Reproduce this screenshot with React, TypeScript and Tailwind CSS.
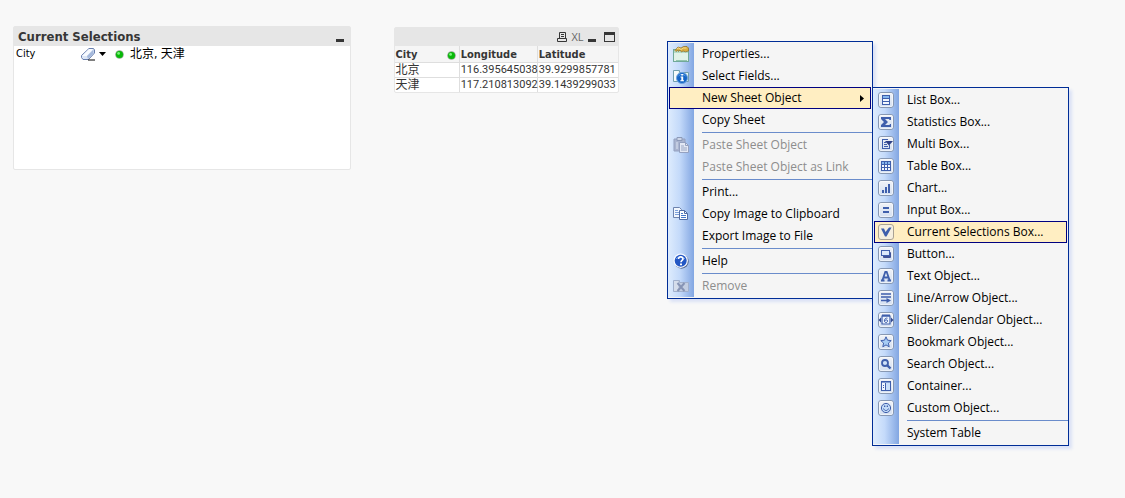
import React from "react";

type Entry = { label: string; icon?: React.ReactNode; disabled?: boolean; active?: boolean; submenu?: Entry[] } | "separator";

const BLUE = "#3f5fac";

function Svg({ children, size = 16 }: { children: React.ReactNode; size?: number }) {
  return (
    <svg width={size} height={size} viewBox={`0 0 ${size} ${size}`} className="shrink-0" aria-hidden="true">
      {children}
    </svg>
  );
}

function Tile({ children }: { children: React.ReactNode }) {
  return (
    <Svg>
      <defs>
        <linearGradient id="tile" x1="0" y1="0" x2="0" y2="1">
          <stop offset="0" stopColor="#f1f3f7" />
          <stop offset="1" stopColor="#d3dff1" />
        </linearGradient>
      </defs>
      <rect x="0.5" y="0.5" width="15" height="15" rx="2.5" fill="url(#tile)" stroke="#8798b3" />
      <rect x="1.5" y="1.5" width="13" height="13" rx="1.5" fill="none" stroke="#fff" strokeOpacity="0.55" />
      {children}
    </Svg>
  );
}

const tiles = {
  list: (
    <Tile>
      <rect x="4.5" y="3.5" width="7" height="9" fill="#f1f6fd" stroke={BLUE} />
      <path d="M5 4h6v2H5z" fill="#84b6ee" />
      <path d="M4 6.5h8M4 9.5h8" stroke={BLUE} />
    </Tile>
  ),
  sigma: (
    <Tile>
      <path d="M3 3h10v3h-1.5l-.5-1H7l3 3-3 3h4.500l.5-1H13v3H3v-2l3-3-3-3z" fill={BLUE} />
    </Tile>
  ),
  multi: (
    <Tile>
      <path d="M4.500 3v10M4 3.500h6M4 12.500h7.500M11.500 9v4M6 6.500h2M6 8.500h3M6 10.500h4" stroke={BLUE} fill="none" />
      <path d="M7 5h8l-4 4.500z" fill="#2c3f86" />
    </Tile>
  ),
  table: (
    <Tile>
      <rect x="3.500" y="3.500" width="9" height="9" fill="#f4f8fe" stroke={BLUE} />
      <path d="M4 4h8v2H4z" fill="#84b6ee" />
      <path d="M6.500 3v10M9.500 3v10M3 6.500h10M3 9.500h10" stroke={BLUE} />
    </Tile>
  ),
  chart: (
    <Tile>
      <path d="M4 10h2v3H4zM7 7h2v6H7zM10 4h2v9h-2z" fill={BLUE} />
    </Tile>
  ),
  input: (
    <Tile>
      <path d="M5 5h6v2H5zM5 9h6v2H5z" fill={BLUE} />
    </Tile>
  ),
  check: (
    <Svg>
      <rect x="0.500" y="0.500" width="15" height="15" rx="2.500" fill="#f6efdf" stroke="#aaa294" />
      <path d="M3 4.500h3L7.500 8 11 3.500h2.500L8.500 12.500h-1.500z" fill={BLUE} />
    </Svg>
  ),
  button: (
    <Tile>
      <rect x="5" y="6" width="8" height="6" rx="1" fill="#3f5298" />
      <rect x="3.500" y="4.500" width="8" height="5" fill="#dce9fb" stroke={BLUE} />
    </Tile>
  ),
  text: (
    <Tile>
      <path d="M4.500 12 7.300 4h1.400l2.800 8M5.500 9.500h5M3 12.500h3.500M9.500 12.500H13" stroke={BLUE} strokeWidth="1.800" fill="none" />
    </Tile>
  ),
  line: (
    <Tile>
      <path d="M3 4h10M3 7h10" stroke={BLUE} strokeWidth="1.600" />
      <path d="M3 10.500h6" stroke={BLUE} strokeWidth="1.500" />
      <path d="M8.500 8 13 10.500 8.500 13z" fill={BLUE} />
    </Tile>
  ),
  slider: (
    <Tile>
      <path d="M0.500 8l2.500-2.500v5zM15.500 8l-2.500-2.500v5z" fill="#33498f" />
      <path d="M4 4h8v8H4z" fill="#edf4fd" stroke={BLUE} strokeWidth="1.200" />
      <path d="M4 3.500h8" stroke={BLUE} strokeWidth="2" />
      <path d="M9.500 6.200C7.800 5.700 6.400 6.800 6.400 8.800c0 2.300 3.200 2.200 3.200.2C9.600 7.400 7 7.500 6.500 9" stroke={BLUE} fill="none" />
    </Tile>
  ),
  star: (
    <Tile>
      <path d="M8 2.800 9.500 6.200l3.700.4-2.800 2.500.8 3.700L8 10.900l-3.200 1.900.8-3.700-2.800-2.500 3.700-.4z" fill="#a6ccf5" stroke={BLUE} />
    </Tile>
  ),
  search: (
    <Tile>
      <circle cx="7" cy="7" r="3" fill="#cfe2fa" stroke={BLUE} strokeWidth="1.800" />
      <path d="m9.300 9.300 3.200 3.200" stroke={BLUE} strokeWidth="2.400" />
    </Tile>
  ),
  container: (
    <Tile>
      <rect x="3.500" y="3.500" width="9" height="9" fill="#cbe0fa" stroke={BLUE} />
      <path d="M4 5h3v7H4z" fill="#f2f7fe" />
      <path d="M3 4h10M7.500 5v7M5 7.500h1M5 9.500h1" stroke={BLUE} />
    </Tile>
  ),
  smiley: (
    <Tile>
      <circle cx="8" cy="8" r="4.600" fill="#c4dcf8" stroke={BLUE} />
      <path d="M6 5.500h1.300V7H6zM8.700 5.500H10V7H8.700z" fill={BLUE} />
      <path d="M5.500 8.500c.8 2.700 4.200 2.700 5 0" stroke={BLUE} fill="none" />
    </Tile>
  ),
};

const icons = {
  properties: (
    <Svg>
      <rect x="0.500" y="3.500" width="15" height="12" fill="#e1f2e8" stroke="#71a999" />
      <path d="M1 4h14v3H1z" fill="#b4dbc9" />
      <path d="M3 14h11v1H3z" fill="#93c5ae" />
      <path d="m2 4.500 3-3.500 3 1L10.500 .5H14l1.500 1.500v3l-3 .8-2.500-.8L8.500 6 7 4 5.500 5.500 5 4 3 5.500z" fill="#d9ae42" stroke="#8b6c24" strokeWidth="0.700" />
      <path d="m4 3 1.500-1L8 3.500 10.500 2h3" stroke="#f7df91" fill="none" />
    </Svg>
  ),
  fields: (
    <Svg>
      <path d="M0.500 2.500h6v2h9v9h-15z" fill="#e3f2ef" stroke="#729fae" />
      <path d="M1 3h4v10H1z" fill="#f6fbfa" />
      <circle cx="9" cy="10" r="5.500" fill="#1464c5" stroke="#70a4df" />
      <path d="M5.500 8a4 3 0 0 1 7 0" fill="none" stroke="#5ca3ec" />
      <path d="M8.200 6h2v1.500h-2zM7.500 8.500h2.700v3.700h.8v1H7.300v-1h1V9.500h-.8z" fill="#fff" />
    </Svg>
  ),
  paste: (
    <Svg>
      <path d="M1 2h11v12H1z" fill="#a9b4cf" stroke="#94a1c0" />
      <path d="M4 .5h5v3H4z" fill="#cdd6e8" stroke="#8d9ab8" />
      <path d="M3 5h2v7H3z" fill="#c2cce0" />
      <path d="M6.500 5.500h6l3 3v7h-9z" fill="#e3e8f4" stroke="#94a1c0" />
      <path d="M8 9h3M8 11h6M8 13h6" stroke="#9ba7c4" />
      <path d="M12.500 5.500v3h3" fill="none" stroke="#94a1c0" />
    </Svg>
  ),
  copy: (
    <Svg>
      <path d="M0.500 1.500h6l2 2v8h-8z" fill="#f2f7fe" stroke="#6d83ae" />
      <path d="M2 4.500h3M2 6.500h4M2 8.500h4" stroke="#7ca0da" />
      <path d="M6.500 4.500h5l3 3v6h-8z" fill="#fff" stroke="#526ca4" />
      <path d="M8 7.500h2M8 9.500h5M8 11.500h5" stroke="#4877c8" />
      <path d="M11.500 4.500v3h3" fill="none" stroke="#526ca4" />
    </Svg>
  ),
  help: (
    <Svg>
      <circle cx="8.500" cy="8.500" r="7.200" fill="#53678f" />
      <circle cx="7.700" cy="7.700" r="7.200" fill="#f7faff" />
      <circle cx="7.700" cy="7.700" r="6" fill="#2357c4" />
      <path d="M3 6a5 4 0 0 1 9 0" stroke="#709cec" fill="none" />
      <path d="M5.500 6c0-3 4.700-2.500 4.500 0C9.900 7.500 8 7.400 8 9.300" stroke="#fff" strokeWidth="1.700" fill="none" />
      <path d="M7 10.500h2v1.800H7z" fill="#fff" />
    </Svg>
  ),
  remove: (
    <Svg>
      <path d="M0.500 2.500h6v2h9v9h-15z" fill="#c3cee2" stroke="#a1b0cc" />
      <path d="M1 3h4v10H1z" fill="#d5ddeb" />
      <path d="m4.500 5 7 8M11.500 5l-7 8" stroke="#8794b5" strokeWidth="2" />
    </Svg>
  ),
};

const sheetObjects: Entry[] = [
  { label: "List Box...", icon: tiles.list },
  { label: "Statistics Box...", icon: tiles.sigma },
  { label: "Multi Box...", icon: tiles.multi },
  { label: "Table Box...", icon: tiles.table },
  { label: "Chart...", icon: tiles.chart },
  { label: "Input Box...", icon: tiles.input },
  { label: "Current Selections Box...", icon: tiles.check, active: true },
  { label: "Button...", icon: tiles.button },
  { label: "Text Object...", icon: tiles.text },
  { label: "Line/Arrow Object...", icon: tiles.line },
  { label: "Slider/Calendar Object...", icon: tiles.slider },
  { label: "Bookmark Object...", icon: tiles.star },
  { label: "Search Object...", icon: tiles.search },
  { label: "Container...", icon: tiles.container },
  { label: "Custom Object...", icon: tiles.smiley },
  "separator",
  { label: "System Table" },
];

const contextMenu: Entry[] = [
  { label: "Properties...", icon: icons.properties },
  { label: "Select Fields...", icon: icons.fields },
  { label: "New Sheet Object", active: true, submenu: sheetObjects },
  { label: "Copy Sheet" },
  "separator",
  { label: "Paste Sheet Object", icon: icons.paste, disabled: true },
  { label: "Paste Sheet Object as Link", disabled: true },
  "separator",
  { label: "Print..." },
  { label: "Copy Image to Clipboard", icon: icons.copy },
  { label: "Export Image to File" },
  "separator",
  { label: "Help", icon: icons.help },
  "separator",
  { label: "Remove", icon: icons.remove, disabled: true },
];

function Menu({ entries, label }: { entries: Entry[]; label: string }) {
  return (
    <div className="border border-[#002d96] bg-[#f5f5f5] py-px shadow-[3px_3px_3px_#dbe2f6]">
      <ul
        role="menu"
        aria-label={label}
        className="bg-[linear-gradient(to_right,#deecfd,#c4dafa_45%,#82a6e2)] bg-[length:26px_100%] bg-no-repeat"
      >
        {entries.map((entry, i) =>
          entry === "separator" ? (
            <li key={i} role="separator" className="ml-[34px] h-[3px] py-px">
              <div className="h-px bg-[#6a8ccb]" />
            </li>
          ) : (
            <li key={i} role="none" className="relative px-px">
              <button
                type="button"
                role="menuitem"
                disabled={entry.disabled}
                aria-haspopup={entry.submenu ? "menu" : undefined}
                className={`flex h-[22px] w-full items-center border pl-[3px] pr-1.5 text-left whitespace-nowrap ${
                  entry.active ? "border-[#000080] bg-[#ffeec2]" : "border-transparent"
                } ${entry.disabled ? "text-[#8d8d8d]" : "text-black"}`}
              >
                <span className="flex w-[29px] shrink-0">{entry.icon}</span>
                <span className="grow">{entry.label}</span>
                {entry.submenu && (
                  <svg width="4" height="7" viewBox="0 0 4 7" aria-hidden="true">
                    <path d="M0 0v7l4-3.500z" fill="#000" />
                  </svg>
                )}
              </button>
              {entry.submenu && (
                <div className="absolute top-0 left-full w-[197px]">
                  <Menu entries={entry.submenu} label={entry.label} />
                </div>
              )}
            </li>
          ),
        )}
      </ul>
    </div>
  );
}

function GreenDot() {
  return (
    <svg width="9" height="9" viewBox="0 0 9 9" className="shrink-0" role="img" aria-label="Selected">
      <circle cx="4.500" cy="4.500" r="4.300" fill="#8fa58f" />
      <circle cx="4.500" cy="4.500" r="3.500" fill="#08b908" />
      <circle cx="3.600" cy="3.400" r="1.400" fill="#7bf57b" />
    </svg>
  );
}

function MinimizeButton() {
  return (
    <button type="button" aria-label="Minimize" className="flex h-2.5 w-2 items-end">
      <span className="h-[3px] w-full bg-[#363636]" />
    </button>
  );
}

function CurrentSelections() {
  return (
    <section className="h-36 w-[30%] rounded-xs border border-[#e6e6e6] bg-white text-black">
      <header className="flex h-[19px] items-center justify-between bg-[#e6e6e6] pr-1.5 pl-1">
        <h2 className="text-[13px] font-bold text-[#363636]">Current Selections</h2>
        <MinimizeButton />
      </header>
      <div className="flex h-4 items-center pl-0.5">
        <span className="w-[65px] text-[11px]">City</span>
        <button type="button" aria-label="Clear City" className="flex">
          <svg width="15" height="13" viewBox="0 0 15 13" aria-hidden="true">
            <path d="M8 .5h4.500l1 1.500v3l-6 6.500H2L.5 9.500V7.500z" fill="#dde7f6" stroke="#697fae" />
            <path d="M8 1h4L6 8H1z" fill="#f8fbff" />
            <path d="m6 8 6.500-6.500v4L7 11z" fill="#a5b9dc" />
            <path d="M7 12h7" stroke="#000" />
          </svg>
        </button>
        <button type="button" aria-label="City values" className="ml-[3px] flex">
          <svg width="7" height="4" viewBox="0 0 7 4" aria-hidden="true">
            <path d="M0 0h7L3.500 4z" fill="#000" />
          </svg>
        </button>
        <span className="ml-[9px] flex">
          <GreenDot />
        </span>
        <span className="ml-1.5 text-xs">北京, 天津</span>
      </div>
    </section>
  );
}

const cities = [
  ["北京", "116.395645038", "39.9299857781"],
  ["天津", "117.210813092", "39.1439299033"],
];

function CityTable() {
  return (
    <section className="mt-px w-[20%] rounded-xs border border-[#e6e6e6] bg-white text-[#363636]">
      <header className="flex h-[18px] items-center justify-end bg-[#e6e6e6] pr-[3px]">
        <button type="button" aria-label="Print" className="mr-1 flex">
          <svg width="10" height="10" viewBox="0 0 10 10" fill="none" stroke="#363636" aria-hidden="true">
            <path d="M2.500 6V.500h6V6M.500 6.500h9v3h-9zM4 2.500h3M4 4.500h3" />
          </svg>
        </button>
        <button type="button" aria-label="Send to Excel" className="mr-1 font-['Open_Sans',sans-serif] text-[11px] leading-3 text-[#666]">
          XL
        </button>
        <MinimizeButton />
        <button type="button" aria-label="Maximize" className="ml-2 h-2.5 w-[11px] border border-t-[3px] border-[#363636]" />
      </header>
      <table className="w-full table-fixed border-collapse text-[11px] leading-[14px]">
        <colgroup>
          <col className="w-[29%]" />
          <col className="w-[35%]" />
          <col className="w-[36%]" />
        </colgroup>
        <thead>
          <tr className="bg-[#f5f5f5] text-left">
            <th scope="col" className="border-r border-b border-[#dedede] p-0 pt-0.5 pr-[3px] pl-px">
              <span className="flex items-center justify-between">
                City
                <GreenDot />
              </span>
            </th>
            <th scope="col" className="border-r border-b border-[#dedede] p-0 pt-0.5 pl-px">Longitude</th>
            <th scope="col" className="border-b border-[#dedede] p-0 pt-0.5 pl-px">Latitude</th>
          </tr>
        </thead>
        <tbody>
          {cities.map(([city, lon, lat], i) => (
            <tr key={city} className={i === 0 ? "border-b border-[#dedede]" : ""}>
              <td className="border-r border-[#dedede] p-0 pl-px text-xs leading-[14px]">{city}</td>
              <td className="border-r border-[#dedede] p-0 pl-px font-['Roboto',sans-serif]">{lon}</td>
              <td className="p-0 pl-px font-['Roboto',sans-serif]">{lat}</td>
            </tr>
          ))}
        </tbody>
      </table>
    </section>
  );
}

export default function App() {
  return (
    <main className="relative min-h-screen bg-[#f8f8f8] font-['DejaVu_Sans_Condensed','Noto_Sans_CJK_SC',sans-serif]">
      <div className="flex items-start gap-[43px] pt-[26px] *:first:ml-[13px]">
        <CurrentSelections />
        <CityTable />
      </div>
      <div className="absolute top-[41px] left-[667px] w-[206px] font-['Open_Sans',sans-serif] text-xs">
        <Menu entries={contextMenu} label="Sheet" />
      </div>
    </main>
  );
}
